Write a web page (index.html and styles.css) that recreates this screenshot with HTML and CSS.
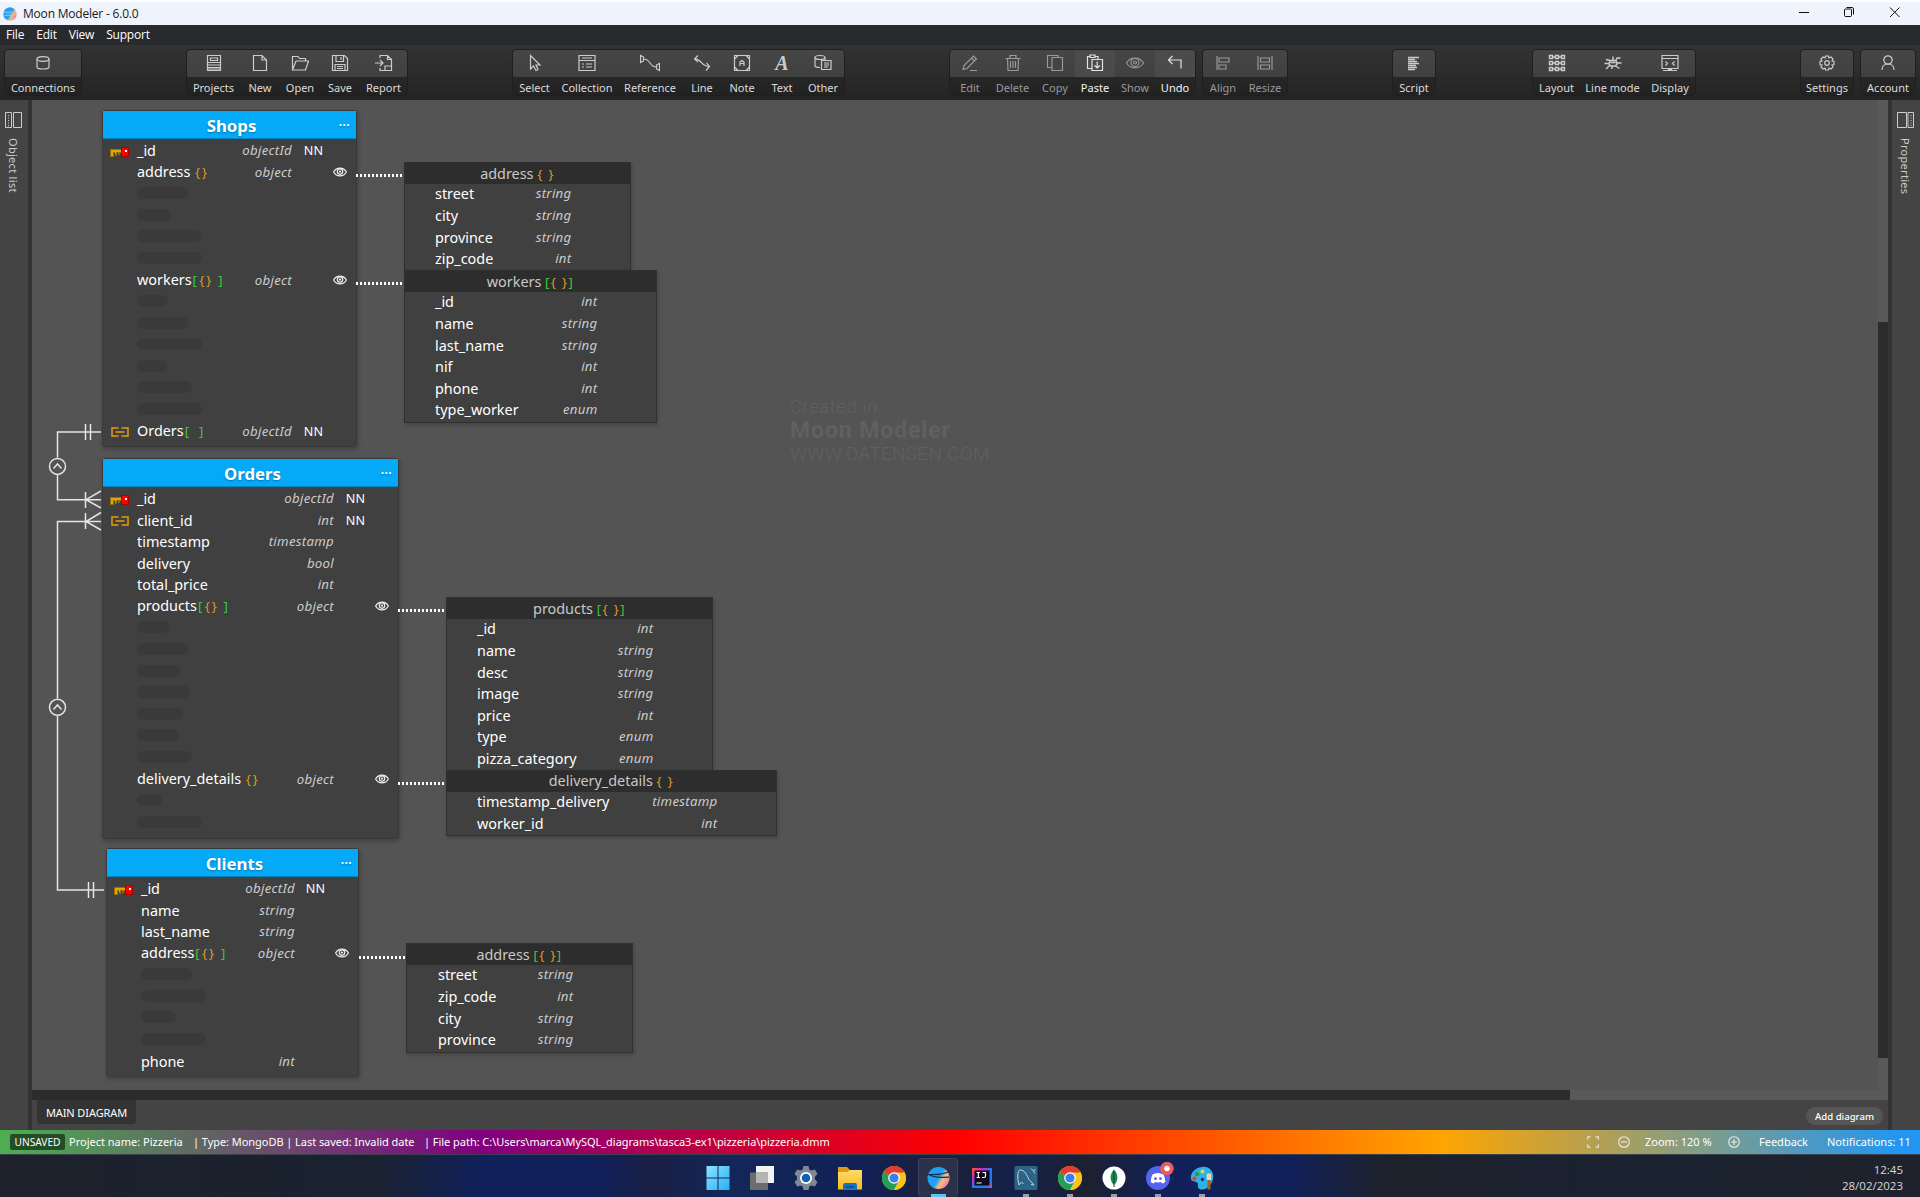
FILE: index.html
```html
<!DOCTYPE html>
<html lang="en">
<head>
<meta charset="utf-8">
<title>Moon Modeler - 6.0.0</title>
<link rel="stylesheet" href="styles.css">
</head>
<body>
<svg class="defs" aria-hidden="true">
  <defs>
    <linearGradient id="g-moon" x1="0" y1=".2" x2="1" y2=".8"><stop offset=".5" stop-color="#1ea0f5"/><stop offset=".68" stop-color="#f9bd78"/><stop offset="1" stop-color="#e46fc0"/></linearGradient>
    <linearGradient id="g-win" x1="0" y1="0" x2="1" y2="1"><stop offset="0" stop-color="#8be3ff"/><stop offset="1" stop-color="#27b1f2"/></linearGradient>
    <linearGradient id="g-ij" x1="0" y1="0" x2="1" y2="1"><stop offset="0" stop-color="#f9562b"/><stop offset=".3" stop-color="#c42bd0"/><stop offset=".5" stop-color="#1d7bf5"/><stop offset=".8" stop-color="#1d7bf5"/><stop offset="1" stop-color="#ff3d6e"/></linearGradient>
    <linearGradient id="g-folder" x1="0" y1="0" x2="0" y2="1"><stop offset="0" stop-color="#ffdb6b"/><stop offset="1" stop-color="#f9bb1c"/></linearGradient>
  </defs>
  <symbol id="key" viewBox="0 0 20 11"><path d="M0 2h12v4h-2v2H8V6H7v3H5V6H4v4H0z" fill="#9a6c00"/><path d="M1 3h11v2H1zM1 5h2v4H1zM5 5h1v2H5z" fill="#e0a800"/><path d="M11 0h8v10h-8z" fill="#a80000"/><path d="M12 1h6v8h-6z" fill="#f00"/><path d="M15 3h2v2h-2z" fill="#fff"/></symbol>
  <symbol id="ref" viewBox="0 0 18 10"><path d="M7.500 1H1v8h6.500M10.500 1H17v8h-6.500M4.500 5h9" fill="none" stroke="#e89a0c" stroke-width="1.500"/></symbol>
  <symbol id="eye" viewBox="0 0 14 10"><path d="M.6 5C3.500-.2 10.500-.2 13.400 5 10.500 10.200 3.500 10.200.6 5z" fill="none" stroke="#eee" stroke-width="1.200"/><circle cx="7" cy="4.600" r="2.700" fill="none" stroke="#eee" stroke-width="1.200"/><circle cx="7" cy="4.600" r="1.100" fill="#eee"/></symbol>
  <symbol id="chrome" viewBox="0 0 24 24"><circle cx="12" cy="12" r="12" fill="#fcc31e"/><path d="M12 12 1.600 6A12 12 0 0 1 22.400 6z" fill="#e33b2e"/><path d="M1.600 6A12 12 0 0 0 12 24l5-9.200L12 12z" fill="#23a055"/><path d="M12 6.500h10.600A12 12 0 0 1 12 24l5-9z" fill="#fcc31e"/><circle cx="12" cy="12" r="5.800" fill="#fff"/><circle cx="12" cy="12" r="4.600" fill="#3b7ff0"/></symbol>
  <symbol id="moon" viewBox="0 0 24 24"><circle cx="12.500" cy="12" r="11" fill="url(#g-moon)"/><path d="M2 8.500c7 .5 14 0 21-2.500M1 8c8 4 14 3.500 22 3" stroke="#123052" stroke-width="1.200" fill="none"/></symbol>
</svg>

<header class="titlebar">
  <svg class="app-icon" viewBox="0 0 24 24"><circle cx="12" cy="12" r="11.500" fill="url(#g-moon)"/><path d="M0 9h15M3 14h14" stroke="#9fd6ff" stroke-width="1.500"/></svg>
  <span class="app-title">Moon Modeler - 6.0.0</span>
  <svg class="win-btns" viewBox="0 0 104 14" fill="none" stroke="#111"><path d="M0 7.500h10"/><rect x="45.500" y="4" width="7" height="7.500" rx="1"/><path d="M47.500 2.500h5.500a1.500 1.500 0 0 1 1.500 1.500v5.500"/><path d="M91 2.500l9.500 9.500M100.500 2.500L91 12"/></svg>
</header>
<nav class="menu"><span>File</span><span>Edit</span><span>View</span><span>Support</span></nav>

<div class="toolbar">
  <div class="group g-conn">
    <button class="w76"><svg viewBox="0 0 18 18"><path d="M3 5v8c0 1.200 2 2 6 2s6-.8 6-2V5"/><ellipse cx="9" cy="5" rx="6" ry="2.300"/></svg><span>Connections</span></button>
  </div>
  <div class="group g-file">
    <button class="w53"><svg viewBox="0 0 18 18"><path d="M2.500 1.500h13v15h-13zM5.500 4h7v2.500h-7z"/><path d="M3 8.500h12M3 11h12M3 13.500h12M3 15h12"/></svg><span>Projects</span></button>
    <button class="w40"><svg viewBox="0 0 18 18"><path d="M2.500 1.500h8.500l4.500 4.500v10.500h-13zM11 1.500V6h4.500"/></svg><span>New</span></button>
    <button class="w40"><svg viewBox="0 0 18 18"><path d="M1.500 16V2.500H7l1.500 2h6V7M1.500 16l3.500-9h12.500l-3 9z"/></svg><span>Open</span></button>
    <button class="w40"><svg viewBox="0 0 18 18"><path d="M1.500 1.500h12l3 3v12h-15zM5 1.500v6h7.500v-6M10 3v3M4 16.500v-6h10v6M6 12.500h6M6 14.500h6"/></svg><span>Save</span></button>
    <button class="w47"><svg viewBox="0 0 18 18"><path d="M5 4V1.500h7.500l4 4v11H5V14M12.500 1.500v4h4M0 9h8M5 6l3 3-3 3M10 16v-4h6"/></svg><span>Report</span></button>
  </div>
  <div class="group g-tools">
    <button class="w43"><svg viewBox="0 0 18 18"><path d="M4.500 1.500v13.500l3-3 2.500 4.500 2-1-2-4.500h4z"/></svg><span>Select</span></button>
    <button class="w62"><svg viewBox="0 0 18 18"><path d="M1 1.500h16v15H1zM1 6.500h16M4 4h10M4 10h2M8 10h6M4 13h2M8 13h6"/></svg><span>Collection</span></button>
    <button class="w64"><svg class="wide" viewBox="0 0 20 18"><path d="M.500 1.500v7l3-1.500V3zM19.500 9.500v7l-3-1.500v-4zM3.500 5c8 0 5 8 13 8"/></svg><span>Reference</span></button>
    <button class="w40"><svg viewBox="0 0 18 18"><path d="M1.500 5C8 4 8.500 13 16.500 12.500M5 1.500L1.500 5 5 8M13.500 9l3 3.500-3.500 4"/></svg><span>Line</span></button>
    <button class="w40"><svg viewBox="0 0 18 18"><path d="M1.500 1.500h15v15h-15zM1.500 5l3.500-3.500M13 1.500L16.500 5M1.500 13L5 16.500M13 16.500l3.500-3.500M7 12V8l2-1.500L11 8v4M7 9.500h4"/></svg><span>Note</span></button>
    <button class="w40"><b class="glyph">A</b><span>Text</span></button>
    <button class="w42"><svg viewBox="0 0 18 18"><path d="M6 13.500c-3 0-5-.5-5-1.500V3.500M11 3.500V6M7.500 6.500h9.500v9H7.500zM10 9h5M10 11h5M10 13h4"/><ellipse cx="6" cy="3.500" rx="5" ry="2"/></svg><span>Other</span></button>
  </div>
  <div class="group g-edit">
    <button class="w40 off"><svg viewBox="0 0 18 18"><path d="M2 15.500l1-4L12.500 2l3 3L6 14.500zM10.500 4l3 3M9 16.500h7"/></svg><span>Edit</span></button>
    <button class="w45 off"><svg viewBox="0 0 18 18"><path d="M1.500 4.500h15M6 4V1.500h6V4M3.500 4.500l.5 12h10l.5-12M6.500 7v7M9 7v7M11.500 7v7"/></svg><span>Delete</span></button>
    <button class="w40 off"><svg viewBox="0 0 18 18"><path d="M6 13.500H1.500v-12H12V3.500M6 3.500h10.500v13H6z"/></svg><span>Copy</span></button>
    <button class="w40 on"><svg viewBox="0 0 18 18"><path d="M6 14.500H1.500v-12H4M4 3.500V1h5v2.500zM9 2.500h3V5M6 5.500h10.500v11H6zM11.200 7.500V14M8.500 11.500L11.200 14l2.800-2.500"/></svg><span>Paste</span></button>
    <button class="w40 off"><svg viewBox="0 0 18 18"><path d="M.5 9c4-6.500 13-6.500 17 0-4 6.500-13 6.500-17 0z"/><circle cx="9" cy="8.500" r="4"/><circle cx="9" cy="8.500" r="1.500"/></svg><span>Show</span></button>
    <button class="w40 on"><svg viewBox="0 0 18 18"><path d="M6.500 2L2.500 6l4 4M2.500 6h12.500v8.500"/></svg><span>Undo</span></button>
  </div>
  <div class="group g-align">
    <button class="w40 off"><svg viewBox="0 0 18 18"><path d="M3 2v14M5 4h10v4H5zM5 11h7v4H5z"/></svg><span>Align</span></button>
    <button class="w44 off"><svg viewBox="0 0 18 18"><path d="M2 2v14M16 2v14M4.500 4h9v4h-9zM4.500 11h9v4h-9z"/></svg><span>Resize</span></button>
  </div>
  <div class="group g-script">
    <button class="w42"><svg class="bold" viewBox="0 0 18 18"><path d="M3 3.500h11M3 5.500h7M3 7.500h9M3 9.500h11M3 11.500h8M3 13.500h9M3 15.500h7"/></svg><span>Script</span></button>
  </div>
  <div class="group g-layout">
    <button class="w47"><svg class="bold" viewBox="0 0 18 18"><path d="M1.500 1.500h3v3h-3zM7.500 1.500h3v3h-3zM13.500 1.500h3v3h-3zM1.500 7.500h3v3h-3zM7.500 7.500h3v3h-3zM13.500 7.500h3v3h-3zM1.500 13.500h3v3h-3zM7.500 13.500h3v3h-3zM13.500 13.500h3v3h-3zM4.500 3h3M10.500 3h3M4.500 9h3M10.500 9h3M4.500 15h3M10.500 15h3"/></svg><span>Layout</span></button>
    <button class="w65"><svg class="bold" viewBox="0 0 18 18"><path d="M6 6.500h6l1 3.500-1.500 2h-5L5 10zM6 6.500L2 5.500M9 6.500v-4M12 6.500L13 4h3.500M13 9h4.500M5 9.500H.5M5.500 11.500L2 15M8 12v3M11.500 12l4 2.500M6.500 8.500h5"/></svg><span>Line mode</span></button>
    <button class="w50"><svg viewBox="0 0 18 18"><path d="M1 1.500h16v13H1zM1 4.500h16M4.500 7.500l2 2-2 2M13.500 7.500l-2 2 2 2M2 16.500h14M7 15.500h4"/></svg><span>Display</span></button>
  </div>
  <div class="group g-set">
    <button class="w52"><svg viewBox="0 0 18 18"><path d="M7.500 2h3l.5 2 2-1 2 2-1 2 2 .500v3l-2 .500 1 2-2 2-2-1-.5 2h-3L7 14l-2 1-2-2 1-2-2-.5v-3L4 7 3 5l2-2 2 1z"/><circle cx="9" cy="9" r="2.300"/></svg><span>Settings</span></button>
  </div>
  <div class="group g-acc">
    <button class="w54"><svg viewBox="0 0 18 18"><circle cx="9" cy="6" r="4.200"/><path d="M3 16c0-4 2.500-6 6-6s6 2 6 6"/></svg><span>Account</span></button>
  </div>
</div>

<main class="workspace">
  <aside class="side left">
    <svg viewBox="0 0 18 16"><path d="M.5.500h6v15h-6zM8.500.500h8v15h-8z"/><path d="M3.500 3v11" stroke-dasharray="1 1.500"/></svg>
    <span>Object list</span>
  </aside>
  <section class="center">
    <div class="canvas">
      <div class="watermark"><span class="wm-a">Created in</span><span class="wm-b">Moon Modeler</span><span class="wm-c">WWW.DATENSEN.COM</span></div>

      <svg class="lines" viewBox="0 0 110 990" fill="none" stroke="#e4e4e4" stroke-width="1.500">
        <path d="M69 332H25.500v25.500M25.500 375v24.700H69M53.500 324v16M58.500 324v16M53.500 392v16M69 391l-15 8.700L69 408"/>
        <circle cx="25.500" cy="366.400" r="8"/><path d="M21.500 368.500l4-4.500 4 4.500"/>
        <path d="M69 421.500H25.500V598.500M25.500 616v174H72M53.500 413v16M69 412.500l-15 9 15 8.500M56.500 782v16M61.500 782v16"/>
        <circle cx="25.500" cy="607.300" r="8"/><path d="M21.500 609.500l4-4.500 4 4.500"/>
      </svg>

      <article class="node n-shops">
        <h2>Shops<i>···</i></h2>
        <div class="row"><svg class="ico"><use href="#key"/></svg><span>_id</span><em>objectId</em><small>NN</small></div>
        <div class="row"><span>address <b>{}</b></span><em>object</em><svg class="eye"><use href="#eye"/></svg></div>
        <div class="row"><s style="width:51px"></s></div>
        <div class="row"><s style="width:34px"></s></div>
        <div class="row"><s style="width:65px"></s></div>
        <div class="row"><s style="width:65px"></s></div>
        <div class="row"><span>workers<u>[</u><b>{}</b> <u>]</u></span><em>object</em><svg class="eye"><use href="#eye"/></svg></div>
        <div class="row"><s style="width:31px"></s></div>
        <div class="row"><s style="width:51px"></s></div>
        <div class="row"><s style="width:65px"></s></div>
        <div class="row"><s style="width:30px"></s></div>
        <div class="row"><s style="width:55px"></s></div>
        <div class="row"><s style="width:65px"></s></div>
        <div class="row"><svg class="ico ref"><use href="#ref"/></svg><span>Orders<u>[</u>&nbsp; <u>]</u></span><em>objectId</em><small>NN</small></div>
      </article>

      <article class="node n-orders">
        <h2>Orders<i>···</i></h2>
        <div class="row"><svg class="ico"><use href="#key"/></svg><span>_id</span><em>objectId</em><small>NN</small></div>
        <div class="row"><svg class="ico ref"><use href="#ref"/></svg><span>client_id</span><em>int</em><small>NN</small></div>
        <div class="row"><span>timestamp</span><em>timestamp</em></div>
        <div class="row"><span>delivery</span><em>bool</em></div>
        <div class="row"><span>total_price</span><em>int</em></div>
        <div class="row"><span>products<u>[</u><b>{}</b> <u>]</u></span><em>object</em><svg class="eye"><use href="#eye"/></svg></div>
        <div class="row"><s style="width:32px"></s></div>
        <div class="row"><s style="width:51px"></s></div>
        <div class="row"><s style="width:43px"></s></div>
        <div class="row"><s style="width:53px"></s></div>
        <div class="row"><s style="width:46px"></s></div>
        <div class="row"><s style="width:42px"></s></div>
        <div class="row"><s style="width:55px"></s></div>
        <div class="row"><span>delivery_details <b>{}</b></span><em>object</em><svg class="eye"><use href="#eye"/></svg></div>
        <div class="row"><s style="width:25px"></s></div>
        <div class="row"><s style="width:65px"></s></div>
      </article>

      <article class="node n-clients">
        <h2>Clients<i>···</i></h2>
        <div class="row"><svg class="ico"><use href="#key"/></svg><span>_id</span><em>objectId</em><small>NN</small></div>
        <div class="row"><span>name</span><em>string</em></div>
        <div class="row"><span>last_name</span><em>string</em></div>
        <div class="row"><span>address<u>[</u><b>{}</b> <u>]</u></span><em>object</em><svg class="eye"><use href="#eye"/></svg></div>
        <div class="row"><s style="width:51px"></s></div>
        <div class="row"><s style="width:65px"></s></div>
        <div class="row"><s style="width:35px"></s></div>
        <div class="row"><s style="width:65px"></s></div>
        <div class="row"><span>phone</span><em>int</em></div>
      </article>

      <article class="sub s-address">
        <h3>address <b>{ }</b></h3>
        <div class="row"><span>street</span><em>string</em></div>
        <div class="row"><span>city</span><em>string</em></div>
        <div class="row"><span>province</span><em>string</em></div>
        <div class="row"><span>zip_code</span><em>int</em></div>
      </article>
      <article class="sub s-workers">
        <h3>workers <u>[</u><b>{ }</b><u>]</u></h3>
        <div class="row"><span>_id</span><em>int</em></div>
        <div class="row"><span>name</span><em>string</em></div>
        <div class="row"><span>last_name</span><em>string</em></div>
        <div class="row"><span>nif</span><em>int</em></div>
        <div class="row"><span>phone</span><em>int</em></div>
        <div class="row"><span>type_worker</span><em>enum</em></div>
      </article>
      <article class="sub s-products">
        <h3>products <u>[</u><b>{ }</b><u>]</u></h3>
        <div class="row"><span>_id</span><em>int</em></div>
        <div class="row"><span>name</span><em>string</em></div>
        <div class="row"><span>desc</span><em>string</em></div>
        <div class="row"><span>image</span><em>string</em></div>
        <div class="row"><span>price</span><em>int</em></div>
        <div class="row"><span>type</span><em>enum</em></div>
        <div class="row"><span>pizza_category</span><em>enum</em></div>
      </article>
      <article class="sub s-delivery">
        <h3>delivery_details <b>{ }</b></h3>
        <div class="row"><span>timestamp_delivery</span><em>timestamp</em></div>
        <div class="row"><span>worker_id</span><em>int</em></div>
      </article>
      <article class="sub s-address2">
        <h3>address <u>[</u><b>{ }</b><u>]</u></h3>
        <div class="row"><span>street</span><em>string</em></div>
        <div class="row"><span>zip_code</span><em>int</em></div>
        <div class="row"><span>city</span><em>string</em></div>
        <div class="row"><span>province</span><em>string</em></div>
      </article>

      <div class="dots d1"></div><div class="dots d2"></div><div class="dots d3"></div><div class="dots d4"></div><div class="dots d5"></div>
    </div>
    <div class="vscroll"><div class="vthumb"></div></div>
    <div class="hscroll"><div class="hthumb"></div></div>
    <div class="tabs"><span class="tab">MAIN DIAGRAM</span><span class="add">Add diagram</span></div>
  </section>
  <aside class="side right">
    <svg viewBox="0 0 18 16"><path d="M.5.500h9v15h-9zM11 .500h5.500v15H11z"/><path d="M14 3v11" stroke-dasharray="1 1.500"/></svg>
    <span>Properties</span>
  </aside>
</main>

<footer class="status">
  <span class="unsaved">UNSAVED</span>
  <span class="st-name">Project name: Pizzeria</span>
  <span class="st-type">| Type: MongoDB | Last saved: Invalid date</span>
  <span class="st-path">| File path: C:\Users\marca\MySQL_diagrams\tasca3-ex1\pizzeria\pizzeria.dmm</span>
  <svg class="st-fit" viewBox="0 0 12 12"><path d="M.7 3.500V.7h2.800M8.500.7h2.800v2.800M11.300 8.500v2.800H8.500M3.500 11.300H.7V8.500"/></svg>
  <svg class="st-minus" viewBox="0 0 12 12"><circle cx="6" cy="6" r="5.300"/><path d="M3 6h6"/></svg>
  <span class="st-zoom">Zoom: 120 %</span>
  <svg class="st-plus" viewBox="0 0 12 12"><circle cx="6" cy="6" r="5.300"/><path d="M3 6h6M6 3v6"/></svg>
  <span class="st-feed">Feedback</span>
  <span class="st-not">Notifications: 11</span>
</footer>

<div class="taskbar">
  <div class="apps">
    <div class="app"><svg viewBox="0 0 24 24"><path d="M.5 0H11.500v11.500H.5zM12.500 0h11v11.500h-11zM.5 12.500h11V24H.5zM12.500 12.500h11V24h-11z" fill="url(#g-win)"/></svg></div>
    <div class="app"><svg viewBox="0 0 24 24"><path d="M6 0h18v17H6z" fill="#f3f3f3"/><path d="M0 6.500h18V24H0z" fill="#6d6d6d"/><path d="M6 6.500h12V17H6z" fill="#b5b5b5"/></svg></div>
    <div class="app"><svg viewBox="0 0 24 24"><path d="M9.500 0h5l.8 3.500 2 1 3.500-1L23.500 8 21 10.500v3l2.500 2.500-2.700 4.500-3.500-1-2 1-.8 3.500h-5l-.8-3.500-2-1-3.500 1L.5 16 3 13.500v-3L.5 8l2.700-4.500 3.500 1 2-1z" fill="#7f8894"/><circle cx="12" cy="12" r="6" fill="#fff"/><circle cx="12" cy="12" r="4.300" fill="#0b62b4"/></svg></div>
    <div class="app"><svg viewBox="0 0 24 24"><path d="M0 1h9l3 3v5H0z" fill="#e09a12"/><path d="M0 6h9l3-2h12v19.500H0z" fill="url(#g-folder)"/><path d="M5 23.500V19q0-2 2-2h10q2 0 2 2v4.500z" fill="#1273c4"/><path d="M8 20h8v1.500H8z" fill="#0a4a86"/></svg></div>
    <div class="app"><svg><use href="#chrome"/></svg></div>
    <div class="app active"><svg><use href="#moon"/></svg></div>
    <div class="app"><svg viewBox="0 0 24 24"><path d="M2 2h20v20H2z" fill="url(#g-ij)"/><path d="M4.500 4.500h15v15h-15z" fill="#100818"/><path d="M6.500 6.500h3.500M8.300 6.500v5M6.500 11.500h3.500M12.500 6.500h3v3.500q0 1.500-1.500 1.500H12M6.500 17h5" stroke="#fff" stroke-width="1.200" fill="none"/></svg></div>
    <div class="app run"><svg viewBox="0 0 24 24"><rect x=".5" width="23" height="24" rx="1.500" fill="#2b6485"/><path d="M5 19C3 11 3.500 5 6 4c5 0 6.500 5 9 9.500l5 5.500-3-.5M5 19l2.500-3 2 2M17 2.500l2.500 2.500 2-2M19.500 5l1.500 2.500" stroke="#cfe2ec" stroke-width=".9" fill="none"/></svg></div>
    <div class="app run"><svg><use href="#chrome"/></svg></div>
    <div class="app run"><svg viewBox="0 0 24 24"><circle cx="12" cy="12" r="11.500" fill="#fff"/><path d="M12 3.500c5 5.500 4 12 0 15.500-4-3.500-5-10 0-15.500z" fill="#178a50"/><path d="M12 5v16" stroke="#0b4a30"/></svg></div>
    <div class="app run"><svg class="over" viewBox="0 0 24 24"><circle cx="12" cy="12" r="12" fill="#5563ee"/><path d="M6.500 8.500q5.500-3 11 0 2 4 1.800 7.500-1.500 1.300-3.300 1.500l-.9-1.500q-3 .8-6.200 0L8 17.500q-1.800-.2-3.300-1.500.1-4 1.800-7.500z" fill="#fff"/><circle cx="9.500" cy="12.700" r="1.400" fill="#5563ee"/><circle cx="14.500" cy="12.700" r="1.400" fill="#5563ee"/><circle cx="21" cy="2.500" r="6.800" fill="#ec5b5b"/><circle cx="21" cy="2.500" r="2.800" fill="#fff"/></svg></div>
    <div class="app run"><svg viewBox="0 0 24 24"><path d="M12 1C4 2 0 8 1 13c.5 2.500 4 2 6 3.500s0 3.500 1.500 5.500 5 2 8.500 0 7-8 6-13.500S17 0 12 1z" fill="#2cb2e6"/><circle cx="7" cy="8" r="2.200" fill="#2e9e2e"/><circle cx="12.500" cy="5.500" r="2" fill="#ffd02c"/><circle cx="4.500" cy="12.500" r="2" fill="#e8402a"/><circle cx="12.500" cy="13.500" r="1.800" fill="#123f78"/><path d="M17.500 14h3v9.500h-3z" fill="#a8611c"/><path d="M16.800 7.500h4.400V14h-4.400z" fill="#ecd9b8"/></svg></div>
  </div>
  <div class="clock"><span>12:45</span><span>28/02/2023</span></div>
</div>
</body>
</html>
```
FILE: styles.css
```css
* { box-sizing: border-box; }
body {
  margin: 0;
  width: 1920px;
  height: 1197px;
  overflow: hidden;
  background: #444;
  color: #fff;
  font-family: "Noto Sans", sans-serif;
  font-size: 12px;
}
.defs { position: absolute; width: 0; height: 0; }

/* window chrome */
.titlebar {
  height: 25px;
  border-top: 2px solid #fff;
  background: #eff3fb;
  display: flex;
  align-items: center;
  color: #1a1a1a;
  padding: 0 17px 0 3px;
}
.app-icon { width: 14px; height: 14px; }
.app-title { margin-left: 6px; font: 12px "Open Sans", sans-serif; letter-spacing: -.2px; }
.win-btns { margin-left: auto; width: 104px; height: 14px; margin-top: -4px; }
.menu {
  height: 20px;
  background: #292a2e;
  display: flex;
  gap: 12px;
  padding-left: 6px;
  line-height: 20px;
  font-family: "Open Sans", sans-serif;
  font-size: 12px;
  letter-spacing: -.2px;
}

/* toolbar */
.toolbar {
  height: 55px;
  display: flex;
  padding: 5px 5px 0;
  background: linear-gradient(#333, #242424);
}
.group {
  display: flex;
  flex: none;
  height: 45px;
  border-radius: 4px;
  overflow: hidden;
  background: linear-gradient(#464646 0, #404040 27px, #272727 27px, #222 100%);
  box-shadow: 0 0 0 1px #1f1f1f;
}
.g-file { margin-left: 106px; }
.g-tools { margin-left: 106px; }
.g-edit { margin-left: 106px; }
.g-align { margin-left: 8px; }
.g-script { margin-left: 106px; }
.g-layout { margin-left: 98px; }
.g-set { margin-left: 106px; }
.g-acc { margin-left: 8px; }
.group button {
  border: 0;
  padding: 4px 0 0;
  margin: 0;
  background: none;
  color: #dcdcdc;
  font: 11px/14px "Noto Sans", sans-serif;
  display: flex;
  flex-direction: column;
  align-items: center;
  gap: 9px;
  white-space: nowrap;
}
.group svg { width: 18px; height: 18px; flex: none; fill: none; stroke: #ccc; stroke-width: 1.200; }
.group svg.wide { width: 20px; }
.group svg.bold { stroke-width: 1.400; }
.glyph { font: italic bold 20px/18px "Liberation Serif", serif; color: #ccc; height: 18px; }
.group .off { color: #999; }
.group .off svg { stroke: #999; }
.group .on { color: #f4f4f4; background: linear-gradient(#4b4b4b 27px, transparent 27px); }
.group .on svg { stroke: #e2e2e2; }
.w40 { width: 40px; } .w42 { width: 42px; } .w43 { width: 43px; } .w44 { width: 44px; }
.w45 { width: 45px; } .w47 { width: 47px; } .w50 { width: 50px; } .w52 { width: 52px; }
.w53 { width: 53px; } .w54 { width: 54px; } .w62 { width: 62px; } .w64 { width: 64px; }
.w65 { width: 65px; } .w76 { width: 76px; }

/* workspace */
.workspace {
  height: 1030px;
  display: grid;
  grid-template-columns: 32px 1fr 32px;
}
.side {
  background: #444;
  display: flex;
  flex-direction: column;
  align-items: center;
  padding-top: 12px;
  gap: 10px;
}
.side.left { border-right: 4px solid #333; }
.side.right { border-left: 4px solid #333; }
.side svg { width: 18px; height: 16px; fill: none; stroke: #ccc; stroke-width: 1; flex: none; }
.side span { writing-mode: vertical-rl; font-size: 11px; line-height: 16px; color: #ccc; letter-spacing: .3px; margin-right: 2px; }
.center {
  display: grid;
  grid-template: 990px 10px 30px / 1846px 10px;
}
.canvas { position: relative; background: #545454; overflow: hidden; }
.vscroll { background: #595959; padding-top: 222px; }
.vthumb { height: 736px; background: #2c2c2c; }
.hscroll { background: #595959; grid-column: 1 / 3; }
.hthumb { width: 1538px; height: 10px; background: #2c2c2c; }
.tabs {
  grid-column: 1 / 3;
  background: #444;
  display: flex;
  justify-content: space-between;
  padding: 0 5px;
}
.tab {
  width: 99px;
  height: 24px;
  background: #333;
  border-radius: 0 0 4px 4px;
  font-size: 11px;
  line-height: 26px;
  text-align: center;
  white-space: nowrap;
  letter-spacing: -.1px;
}
.add {
  margin-top: 7px;
  width: 77px;
  height: 18px;
  border-radius: 9px;
  background: #555;
  font-size: 9.600px;
  line-height: 19px;
  text-align: center;
  font-weight: 500;
}

/* diagram */
.lines { position: absolute; left: 0; top: 0; width: 110px; height: 990px; }
.watermark {
  position: absolute;
  left: 758px;
  top: 295px;
  color: #606060;
  font-family: Roboto, sans-serif;
  display: flex;
  flex-direction: column;
  line-height: 23.500px;
}
.wm-a { font-size: 18px; letter-spacing: .8px; font-weight: 300; }
.wm-b { font-size: 23px; font-weight: 700; letter-spacing: .9px; }
.wm-c { font-size: 19px; font-weight: 300; letter-spacing: .3px; }

.node, .sub { position: absolute; background: #404040; }
.node {
  border: 1px solid #3a3a3a;
  border-radius: 3px;
  box-shadow: 1px 2px 4px rgba(0,0,0,.25);
}
.n-shops { left: 70px; top: 10px; width: 255px; height: 337px; }
.n-orders { left: 70px; top: 358px; width: 297px; height: 381px; }
.n-clients { left: 74px; top: 748px; width: 253px; height: 229px; }
.node h2 {
  margin: 0 0 1px;
  height: 28px;
  background: #04a9f8;
  border-bottom: 1px solid #0784c0;
  font-size: 16.800px;
  line-height: 29px;
  text-align: center;
  padding-left: 4px;
  position: relative;
  text-shadow: 0 1px 2px rgba(0,0,0,.3);
}
.node h2 i {
  position: absolute;
  right: 6px;
  top: -1px;
  font-size: 12px;
  font-style: normal;
  letter-spacing: .4px;
}
.row {
  height: 21.600px;
  line-height: 21.600px;
  display: flex;
  align-items: center;
  padding-left: 34px;
  padding-right: 64px;
  position: relative;
  white-space: nowrap;
}
.n-clients .row { padding-right: 63px; }
.row span { font-size: 14.400px; white-space: pre; }
.row em { margin-left: auto; font-size: 13.200px; letter-spacing: .3px; color: #ccc; }
.row small { position: absolute; right: 33px; font-size: 12.600px; }
.row s { height: 12px; border-radius: 6px; background: #3a3a3a; margin-top: -2px; }
.row b, .row u, .sub h3 b, .sub h3 u { font-weight: 400; text-decoration: none; font-size: 13.200px; letter-spacing: 1.400px; }
.row b { margin-left: 1px; letter-spacing: 2px; }
.row u { margin-left: 1px; }
.row b, .sub h3 b { color: #dc9a28; }
.row u, .sub h3 u { color: #34cc38; }
.ico { position: absolute; left: 7px; top: 7px; width: 20px; height: 11px; }
.ico.ref { left: 8px; top: 6px; width: 18px; height: 10px; }
.eye { position: absolute; right: 9px; top: 5px; width: 14px; height: 10px; }

.sub { border: 1px solid #303030; box-shadow: 1px 2px 4px rgba(0,0,0,.2); }
.sub h3 {
  margin: 0;
  height: 21px;
  background: #2d2d2d;
  font-size: 14.400px;
  font-weight: 400;
  line-height: 22px;
  color: #c8c8c8;
  text-align: center;
}
.sub .row { padding-left: 30px; padding-right: 58.500px; top: -.7px; }
.s-address { left: 372px; top: 62px; width: 227px; height: 109px; }
.s-workers { left: 372px; top: 170px; width: 253px; height: 153px; }
.s-products { left: 414px; top: 497px; width: 267px; height: 174px; }
.s-delivery { left: 414px; top: 670px; width: 331px; height: 66px; }
.s-delivery h3 { line-height: 20px; }
.s-address2 { left: 374px; top: 843px; width: 227px; height: 110px; }
.s-address2 .row { padding-left: 31px; }
.dots {
  position: absolute;
  width: 48px;
  height: 2.500px;
  background: repeating-linear-gradient(90deg, #fff 0 2.400px, transparent 2.400px 4px);
}
.d1 { left: 324px; top: 74px; }
.d2 { left: 324px; top: 182px; }
.d3 { left: 366px; top: 509px; }
.d4 { left: 366px; top: 682px; }
.d5 { left: 327px; top: 856px; }

/* status bar */
.status {
  height: 24px;
  background: linear-gradient(90deg, #4caf50, purple 25%, red 50%, orange 75%, #2196f3 99%);
  display: flex;
  align-items: center;
  padding: 0 10px 1px;
  font-size: 11px;
  white-space: nowrap;
}
.unsaved {
  width: 55px;
  height: 16px;
  background: #234d26;
  border-radius: 2px;
  text-align: center;
  line-height: 17px;
  font-size: 10.200px;
}
.st-name { margin-left: 4px; width: 124px; }
.st-type { width: 231px; letter-spacing: -.05px; }
.st-path { letter-spacing: -.04px; }
.st-fit { margin-left: auto; }
.status svg { width: 12px; height: 12px; fill: none; stroke: #f2efdf; stroke-width: 1.100; }
.st-minus { margin-left: 19px; }
.st-zoom { margin-left: 15px; width: 67px; }
.st-plus { margin-left: 16px; }
.st-feed { margin-left: 19px; width: 49px; }
.st-not { margin-left: 19px; width: 83px; }

/* taskbar */
.taskbar {
  height: 43px;
  border-top: 1px solid #3c424c;
  background: linear-gradient(90deg, #1d212c 0, #1a212e 15%, #1a2233 20%, #10205a 25%, #10205a 31%, #1a1f45 34%, #13265a 38%, #122056 45%, #1b2038 49%, #15204a 53%, #1d2030 56.500%, #112058 61%, #10205a 67%, #1d212c 72%, #1a2230 86%, #1f222c 100%);
  display: flex;
  justify-content: space-between;
  padding: 0 17px 0 696px;
}
.apps { display: flex; }
.app {
  width: 44px;
  height: 42px;
  padding: 11px 10px 0;
  background-repeat: no-repeat;
}
.app svg { width: 24px; height: 24px; display: block; }
.app svg.over { overflow: visible; }
.app.active {
  width: 40px;
  height: 39px;
  margin: 3px 2px 0;
  border: 1px solid rgba(255,255,255,.08);
  border-bottom: 0;
  padding: 7px 7px 0;
  border-radius: 4px;
  background: linear-gradient(#5bc4f8, #5bc4f8) 12px 35px / 15px 4px no-repeat rgba(255,255,255,.08);
}
.app.run { background-image: linear-gradient(#9a9ca6, #9a9ca6); background-size: 6px 3px; background-position: 19px 39px; }
.clock {
  display: flex;
  flex-direction: column;
  align-items: flex-end;
  padding-top: 7px;
  font: 11.500px/16px "Open Sans", sans-serif;
  color: #d8d8dc;
}
```
